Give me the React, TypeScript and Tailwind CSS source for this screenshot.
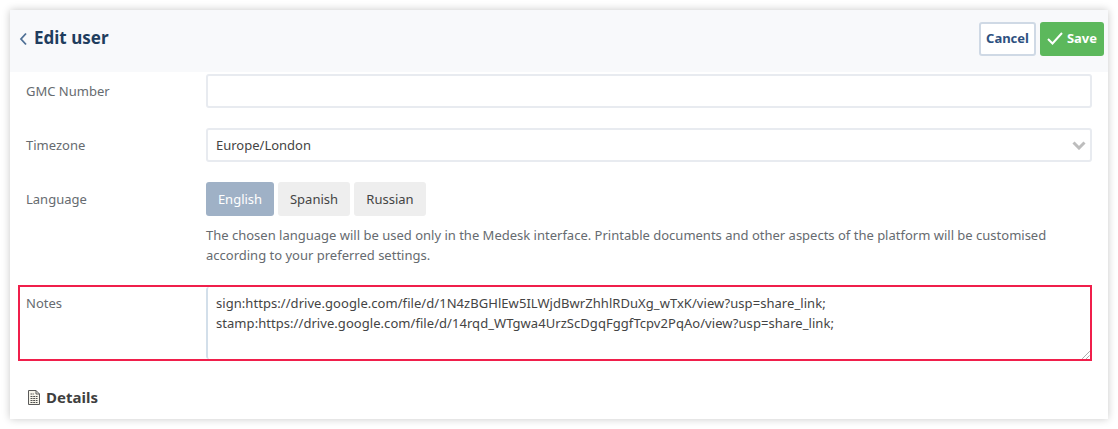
import React from "react";

function Row({ label, children, className = "" }: { label: string; children: React.ReactNode; className?: string }) {
  return (
    <div className={`flex ${className}`}>
      <div className="w-[188px] shrink-0 pt-[7px] text-[13px] leading-[20px] text-[#666b70] pl-[8px]">{label}</div>
      <div className="flex-1 min-w-0">{children}</div>
    </div>
  );
}

const inputCls = "h-[34px] w-full rounded-[3px] border-2 border-[#e8ebf0] bg-white";

export default function App() {
  return (
    <div className="w-[1118px] h-[429px] bg-white p-[10px] overflow-hidden" style={{ fontFamily: '"Noto Sans", sans-serif' }}>
      <div className="w-[1098px] h-[409px] bg-white shadow-[0_0_8px_rgba(0,0,0,0.22)] overflow-hidden">
        <header className="h-[62px] bg-[#f8f9fb] flex items-center justify-between pl-[8px] pr-[4px] pb-[5px]">
          <div className="flex items-center gap-[6px] mb-[2px]">
            <svg width="10" height="14" viewBox="0 0 10 14" fill="none" className="mt-[3px]">
              <path d="M8 1.5 L3 7 L8 12.5" stroke="#4f7096" strokeWidth="1.8" />
            </svg>
            <h1 className="text-[17px] leading-[24px] font-bold text-[#1f3d5e]">Edit user</h1>
          </div>
          <div className="flex items-center gap-[4px]">
            <button className="w-[57px] h-[34px] rounded-[3px] border-2 border-[#cfd9e5] bg-white text-[13px] font-bold text-[#2d5080]">Cancel</button>
            <button className="w-[64px] h-[34px] rounded-[3px] bg-[#5cb85c] text-[13px] font-bold text-white flex items-center justify-center gap-[4px]">
              <svg width="16" height="13" viewBox="0 0 16 13" fill="none">
                <path d="M1 7 L5.5 11.5 L15 1" stroke="white" strokeWidth="2" />
              </svg>
              Save
            </button>
          </div>
        </header>
        <div className="pl-[8px] pr-[16px] pt-[2px]">
          <Row label="GMC Number">
            <div className={inputCls} />
          </Row>
          <Row label="Timezone" className="mt-[20px]">
            <div className={`${inputCls} flex items-center justify-between pl-[8px] pr-[4px] text-[13px] text-[#444]`}>
              <span className="pt-[1px]">Europe/London</span>
              <svg width="14" height="9" viewBox="0 0 14 9" fill="none">
                <path d="M1.5 1.5 L7 7 L12.5 1.5" stroke="#bdbdbd" strokeWidth="3" />
              </svg>
            </div>
          </Row>
          <Row label="Language" className="mt-[20px]">
            <div className="flex gap-[4px]">
              <div className="h-[34px] w-[68px] rounded-[3px] bg-[#9fb1c6] pt-[1px] text-white text-[13px] flex items-center justify-center">English</div>
              <div className="h-[34px] w-[72px] rounded-[3px] bg-[#eeeeee] pt-[1px] text-[#444] text-[13px] flex items-center justify-center">Spanish</div>
              <div className="h-[34px] w-[72px] rounded-[3px] bg-[#eeeeee] pt-[1px] text-[#444] text-[13px] flex items-center justify-center">Russian</div>
            </div>
            <p className="mt-[9px] text-[13px] leading-[20px] text-[#666b70]">
              The chosen language will be used only in the Medesk interface. Printable documents and other aspects of the platform will be customised according to your preferred settings.
            </p>
          </Row>
          <div className="mt-[20px] border-2 border-[#f01f4b] h-[76px] flex">
            <div className="w-[186px] shrink-0 pl-[6px] pt-[6px] text-[13px] leading-[20px] text-[#666b70]">Notes</div>
            <div className="relative flex-1 border-l-2 border-[#d3dfea] rounded-l-[3px] pl-[8px] pt-[6px] text-[13px] tracking-[0.053px] leading-[20px] text-[#444]">
              <div>sign:https://drive.google.com/file/d/1N4zBGHlEw5ILWjdBwrZhhlRDuXg_wTxK/view?usp=share_link;</div>
              <div>stamp:https://drive.google.com/file/d/14rqd_WTgwa4UrzScDgqFggfTcpv2PqAo/view?usp=share_link;</div>
              <svg width="8" height="8" viewBox="0 0 8 8" className="absolute right-0 bottom-0">
                <path d="M0.5 7.5 L7.5 0.5 M4.5 7.5 L7.5 4.5" stroke="#666" strokeWidth="1" strokeDasharray="1 0.5" />
              </svg>
            </div>
          </div>
          <div className="mt-[26px] ml-[10px] flex items-center gap-[6px]">
            <svg width="12" height="15" viewBox="0 0 12 15" fill="none">
              <path d="M0.5 0.5 H8 L11.5 4 V14.5 H0.5 Z" stroke="#5a5a5a" strokeWidth="1" fill="#f6f4ea" />
              <path d="M8 0.5 V4 H11.5" stroke="#5a5a5a" strokeWidth="1" />
              <path d="M2.5 4 H6 M2.5 6.5 H9.5 M2.5 8.5 H9.5 M2.5 10.5 H9.5 M2.5 12.5 H9.5" stroke="#4f4f4f" strokeWidth="1" strokeDasharray="2 0.7" />
            </svg>
            <span className="text-[15px] leading-[20px] font-bold text-[#3f3f3f]">Details</span>
          </div>
        </div>
      </div>
    </div>
  );
}
